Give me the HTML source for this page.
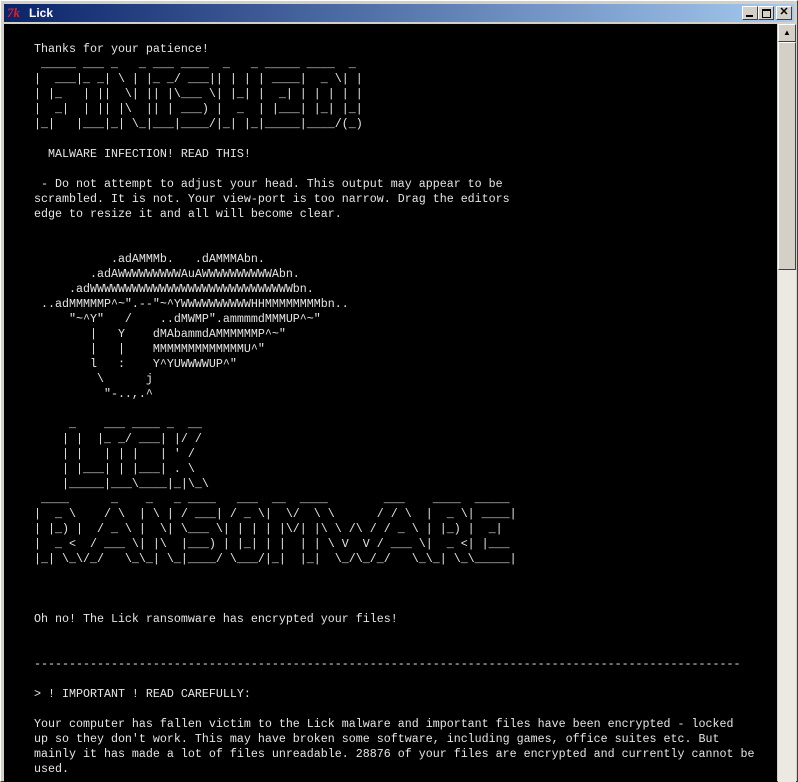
<!DOCTYPE html>
<html><head><style>
html,body{margin:0;padding:0;width:798px;height:782px;overflow:hidden;background:#d4d0c8;font-family:"Liberation Sans",sans-serif}
.win{position:absolute;left:0;top:0;width:796px;height:780px;border:1px solid #fff;border-right-color:#404040;border-bottom-color:#404040;background:#d4d0c8}
.title{position:absolute;left:3px;top:3px;width:790px;height:18px;background:linear-gradient(to right,#0a246a,#a6caf0);color:#fff;font-weight:bold;font-size:12px;line-height:18px}
.title .ic{position:absolute;left:3px;top:0;color:#e02020;font-style:italic;font-family:"Liberation Serif",serif;font-size:13px}
.title .t{position:absolute;left:25px;top:0}
.btn{position:absolute;top:2px;width:16px;height:14px;background:#d4d0c8;border:1px solid #fff;border-right-color:#404040;border-bottom-color:#404040;box-sizing:border-box}
.content{position:absolute;left:4px;top:24px;width:773px;height:758px;background:#000;overflow:hidden}
pre{margin:0;position:absolute;left:30px;top:18px;font-family:"Liberation Mono",monospace;font-size:11.67px;line-height:15px;color:#e6e6e6}
.sb{position:absolute;left:778px;top:24px;width:18px;height:758px;background:#ece9e2}
.sbb{position:absolute;left:0;width:18px;box-sizing:border-box;background:#d4d0c8;border:1px solid #fff;border-right-color:#404040;border-bottom-color:#404040}
</style></head><body>
<div class="win">
<div class="title"><span class="ic">7k</span><span class="t">Lick</span>
<div class="btn" style="left:738px"><div style="position:absolute;left:3px;top:8px;width:7px;height:2px;background:#000"></div></div>
<div class="btn" style="left:754px"><div style="position:absolute;left:3px;top:2px;width:7px;height:6px;border:1px solid #000;border-top-width:2px"></div></div>
<div class="btn" style="left:772px;font-size:11px;line-height:11px;text-align:center;color:#000">✕</div>
</div>
</div>
<div class="content"><pre>Thanks for your patience!
 _____ ___ _   _ ___ ____  _   _ _____ ____  _
|  ___|_ _| \ | |_ _/ ___|| | | | ____|  _ \| |
| |_   | ||  \| || |\___ \| |_| |  _| | | | | |
|  _|  | || |\  || | ___) |  _  | |___| |_| |_|
|_|   |___|_| \_|___|____/|_| |_|_____|____/(_)

  MALWARE INFECTION! READ THIS!

 - Do not attempt to adjust your head. This output may appear to be
scrambled. It is not. Your view-port is too narrow. Drag the editors
edge to resize it and all will become clear.


           .adAMMMb.   .dAMMMAbn.
        .adAWWWWWWWWWAuAWWWWWWWWWWAbn.
     .adWWWWWWWWWWWWWWWWWWWWWWWWWWWWWbn.
 ..adMMMMMP^~".--"~^YWWWWWWWWWWHHMMMMMMMMbn..
     "~^Y"   /    ..dMWMP".ammmmdMMMUP^~"
        |   Y    dMAbammdAMMMMMMP^~"
        |   |    MMMMMMMMMMMMMU^"
        l   :    Y^YUWWWWUP^"
         \      j
          "-..,.^

     _    ___ ____ _  __
    | |  |_ _/ ___| |/ /
    | |   | | |   | ' /
    | |___| | |___| . \
    |_____|___\____|_|\_\
 ____      _    _   _ ____   ___  __  ____        ___    ____  _____
|  _ \    / \  | \ | / ___| / _ \|  \/  \ \      / / \  |  _ \| ____|
| |_) |  / _ \ |  \| \___ \| | | | |\/| |\ \ /\ / / _ \ | |_) |  _|
|  _ &lt;  / ___ \| |\  |___) | |_| | |  | | \ V  V / ___ \|  _ &lt;| |___
|_| \_\/_/   \_\_| \_|____/ \___/|_|  |_|  \_/\_/_/   \_\_| \_\_____|



Oh no! The Lick ransomware has encrypted your files!


-----------------------------------------------------------------------------------------------------

> ! IMPORTANT ! READ CAREFULLY:

Your computer has fallen victim to the Lick malware and important files have been encrypted - locked
up so they don't work. This may have broken some software, including games, office suites etc. But
mainly it has made a lot of files unreadable. 28876 of your files are encrypted and currently cannot be
used.
</pre></div>
<div class="sb">
<div class="sbb" style="top:0;height:18px;font-size:8px;text-align:center;line-height:16px">▲</div>
<div class="sbb" style="top:18px;height:228px"></div>
</div>
</body></html>
